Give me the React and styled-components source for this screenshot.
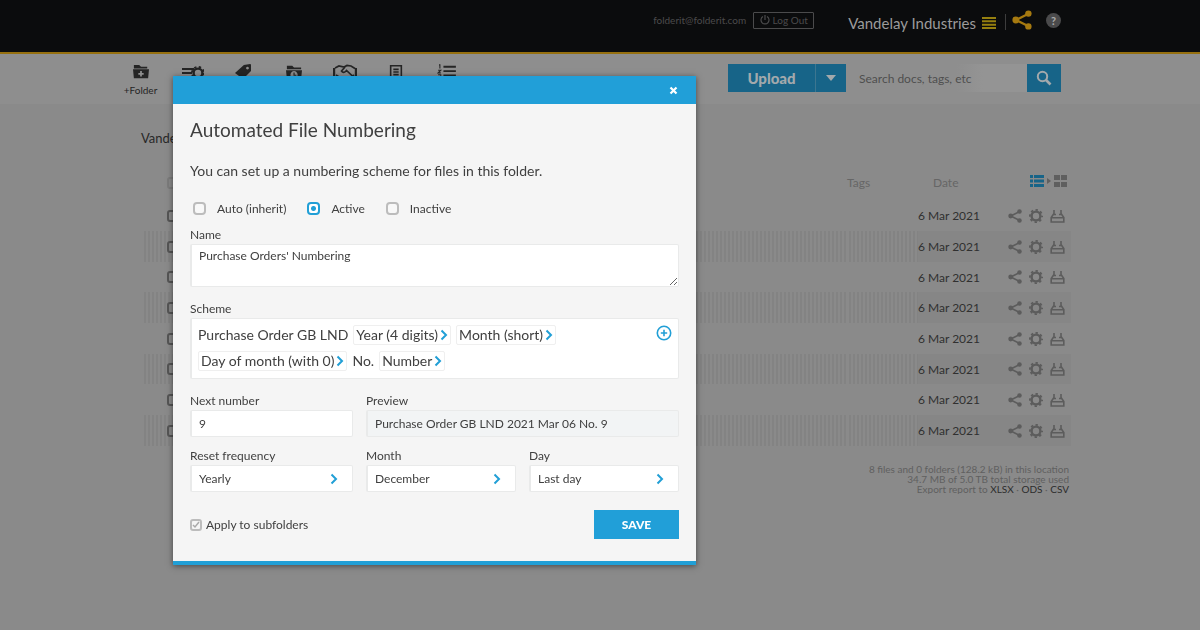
import React from 'react';
import styled, { createGlobalStyle, css } from 'styled-components';

const Global = createGlobalStyle`
  * { box-sizing: border-box; }
  body { margin: 0; background: #8a8a8a; color: #333; font-family: Lato, "Liberation Sans", sans-serif; font-size: 12px; }
  button, input, select, textarea { font: inherit; color: inherit; margin: 0; }
  button { padding: 0; border: 0; background: none; cursor: pointer; }
  svg { display: block; flex: none; }
`;

const Wrap = styled.div`
  max-width: 970px;
  margin: 0 auto;
`;

/* ---------- top bar ---------- */
const TopBar = styled.header`
  background: #0b0c0d;
  border-bottom: 2px solid #96700f;
`;
const TopInner = styled(Wrap)`
  display: flex;
  justify-content: flex-end;
  align-items: flex-start;
  height: 52px;
  padding: 8px 24px 0 0;
`;
const Account = styled.div`
  display: flex;
  align-items: center;
  gap: 7px;
  height: 24px;
  margin-right: 34px;
  font-size: 10px;
  color: #4b4b4c;
`;
const LogOut = styled.button`
  display: flex;
  align-items: center;
  justify-content: center;
  gap: 3px;
  width: 61px;
  height: 17px;
  border: 1px solid #4b4b4c;
  border-radius: 1px;
`;
const Company = styled.button`
  display: flex;
  align-items: center;
  gap: 6px;
  height: 30px;
  font-size: 15px;
  color: #9b9b9b;
`;
const Divider = styled.span`
  width: 1px;
  height: 16px;
  margin: 6px 6px 0 9px;
  background: #3d3d3d;
`;
const IconLink = styled.button`
  height: 24px;
  display: flex;
  align-items: center;
  color: #a67a10;
`;
const Help = styled.button`
  width: 15px;
  height: 15px;
  margin: 5px 0 0 14px;
  border-radius: 50%;
  background: #4a4a4b;
  color: #aaa;
  font-size: 11px;
  font-weight: 700;
  line-height: 15px;
`;

/* ---------- tool bar ---------- */
const ToolBar = styled.div`
  background: #8e8e8e;
`;
const ToolInner = styled(Wrap)`
  display: flex;
  justify-content: space-between;
  height: 50px;
  padding: 10px 24px 0 0;
`;
const Tools = styled.nav`
  display: flex;
`;
const Tool = styled.button`
  display: flex;
  flex-direction: column;
  align-items: center;
  gap: 4px;
  width: 51px;
  font-size: 10px;
  line-height: 12px;
  white-space: nowrap;
  color: #252525;
`;
const Actions = styled.div`
  display: flex;
  height: 28px;
`;
const Blue = styled.button`
  display: flex;
  align-items: center;
  justify-content: center;
  width: ${p => p.$w}px;
  height: 28px;
  background: #176488;
  color: #a3a9ac;
  font-size: 15px;
  font-weight: 900;
  border-left: ${p => (p.$split ? '1px solid #3d7690' : '0')};
`;
const Search = styled.form`
  display: flex;
  margin-left: 5px;
`;
const SearchInput = styled.input`
  width: 176px;
  height: 28px;
  padding: 0 8px;
  border: 0;
  background: linear-gradient(to right, #8e8e8e, #8e8e8e 60%, #949494 75%);
  font-size: 12px;
  outline: 0;
  &::placeholder { color: #4f4f4f; opacity: 1; }
`;

/* ---------- file list ---------- */
const Crumb = styled.div`
  padding: 26px 0 0 26px;
  font-size: 13px;
  line-height: 16px;
  color: #282828;
`;
const Files = styled.table`
  width: calc(100% - 41px);
  margin: 19px 14px 0 27px;
  border-collapse: collapse;
  table-layout: fixed;
  td, th { padding: 0; text-align: left; font-weight: 400; }
`;
const HeadRow = styled.tr`
  height: 35px;
  color: #666;
`;
const DateHead = styled.th`
  && { padding-left: 15px; }
`;
const FileRow = styled.tr`
  height: 31px;
  &:nth-child(3n) { height: 30px; }
  &:nth-child(even) { background: #868686; }
  &:nth-child(even) td:not(:nth-last-child(-n + 2)) {
    background: repeating-linear-gradient(to right, #8a8a8a 0 2px, #838383 2px 4px);
  }
  color: #303030;
`;
const RowBox = styled.input`
  appearance: none;
  display: block;
  width: 12px;
  height: 12px;
  margin-left: 25px;
  border: 2px solid ${p => (p.$faint ? '#7c7c7c' : '#555')};
  border-radius: 3px;
`;
const RowActions = styled.div`
  display: flex;
  gap: 7px;
  color: #5c5c5c;
`;
const Views = styled.div`
  display: flex;
  align-items: center;
  gap: 3px;
  padding: 0 0 4px 22px;
  color: #5f5f5f;
`;
const Summary = styled.p`
  margin: 18px 16px 0 0;
  text-align: right;
  font-size: 10px;
  line-height: 10px;
  color: #606060;
  a { color: #2c2c2c; text-decoration: none; border-bottom: 1px solid #2c2c2c; }
`;

/* ---------- dialog ---------- */
const Overlay = styled.div`
  position: fixed;
  inset: 0;
  padding: 76px 0 0 173px;
`;
const Dialog = styled.section`
  width: 523px;
  background: #f5f5f5;
  border-bottom: 4px solid #219fd6;
  box-shadow: 0 1px 6px rgba(0, 0, 0, 0.5);
  color: #404040;
`;
const DialogBar = styled.div`
  display: flex;
  justify-content: flex-end;
  align-items: center;
  height: 28px;
  padding-right: 18px;
  background: #219fd8;
  color: #fff;
`;
const Body = styled.form`
  padding: 14px 17px 22px;
`;
const Title = styled.h2`
  margin: 0;
  font-size: 19px;
  line-height: 24px;
  font-weight: 400;
`;
const Intro = styled.p`
  margin: 20px 0 0;
  font-size: 14px;
  line-height: 18px;
`;
const Radios = styled.div`
  display: flex;
  gap: 21px;
  margin: 19px 0 9px 3px;
`;
const Choice = styled.label`
  display: flex;
  align-items: center;
  gap: ${p => p.$gap}px;
  height: 18px;
  font-size: 12px;
`;
const Radio = styled.input`
  appearance: none;
  width: 13px;
  height: 13px;
  border: 2px solid #bcbcbc;
  border-radius: 4px;
  background: #f8f8f8;
  &:checked {
    border-color: #219fd6;
    background: radial-gradient(circle, #219fd6 0 2px, #fff 3px);
  }
`;
const TickHolder = styled.span`
  display: grid;
  > * { grid-area: 1 / 1; }
  svg { margin: 2px; pointer-events: none; }
`;
const Tick = styled.input`
  appearance: none;
  width: 12px;
  height: 12px;
  border: 2px solid #bcbcbc;
  border-radius: 3px;
`;
const Label = styled.label`
  display: block;
  font-size: 12px;
  line-height: 18px;
`;
const box = css`
  width: 100%;
  border: 1px solid #e9eaea;
  border-left: 2px solid #e9eaea;
  border-radius: 2px;
  background: #fff;
  outline: 0;
  font-size: 12px;
`;
const NameArea = styled.textarea`
  ${box}
  display: block;
  height: 43px;
  margin-bottom: 13px;
  padding: 3px 7px;
  line-height: 16px;
`;
const Scheme = styled.div`
  ${box}
  display: flex;
  justify-content: space-between;
  align-items: flex-start;
  height: 61px;
  margin-bottom: 13px;
  padding: 6px 6px 0;
`;
const Parts = styled.div`
  display: flex;
  flex-wrap: wrap;
  align-items: center;
  gap: 6px 5px;
  width: 400px;
  font-size: 14px;
  line-height: 20px;
`;
const Part = styled.button`
  display: flex;
  align-items: center;
  gap: 2px;
  height: 20px;
  padding: 0 2px;
  border: 1px solid #efefef;
  border-radius: 2px;
`;
const Fields = styled.div`
  display: grid;
  grid-template-columns: ${p => p.$cols};
  column-gap: 13px;
  margin-bottom: 10px;
`;
const Text = styled.input`
  ${box}
  display: block;
  height: 27px;
  padding: 0 7px;
  &:read-only { background: #f2f4f5; }
`;
const SelectHolder = styled.div`
  display: grid;
  align-items: center;
  > * { grid-area: 1 / 1; }
  svg { justify-self: end; margin-right: 15px; pointer-events: none; }
`;
const Select = styled.select`
  ${box}
  appearance: none;
  height: 27px;
  padding: 0 7px;
`;
const Foot = styled.div`
  display: flex;
  justify-content: space-between;
  align-items: center;
  margin-top: 18px;
`;
const Save = styled.button`
  width: 85px;
  height: 29px;
  background: #219fd8;
  color: #fff;
  font-size: 12px;
  font-weight: 900;
`;

/* ---------- drawings ---------- */
const Chevron = () => (
  <svg width="8" height="12" viewBox="0 0 8 12" fill="none" stroke="#219fd6" strokeWidth="2"><path d="M1.5 1.5 6 6l-4.5 4.5" /></svg>
);
const ShareIcon = ({ s }) => (
  <svg width={s} height={s} viewBox="0 0 20 20" fill="currentColor"><path d="M16 4 4 10l12 6" fill="none" stroke="currentColor" strokeWidth="2.4" /><circle cx="16.4" cy="3.6" r="3.2" /><circle cx="3.8" cy="10" r="3.4" /><circle cx="16.4" cy="16.4" r="3.2" /></svg>
);
const GearIcon = () => (
  <svg width="14" height="14" viewBox="0 0 14 14" fill="none" stroke="currentColor"><circle cx="7" cy="7" r="4.4" strokeWidth="2.4" /><circle cx="7" cy="7" r="6.1" strokeWidth="1.8" strokeDasharray="2.4 2.39" strokeDashoffset="1.2" /></svg>
);
const TrayIcon = () => (
  <svg width="15" height="14" viewBox="0 0 15 14" fill="none" stroke="currentColor" strokeWidth="1.6"><path d="M4 1v3.500L1.200 8.500V13h12.600V8.500L11 4.500V1M1 8.700h13M3.500 5.500h2.500M9 5.500h2.500" /></svg>
);
const toolIcons = [
  { name: 'Folder', art: <path fill="currentColor" fillRule="evenodd" d="M2 1h6l2 2h7v2H2zM1 6h18l-1 10H2zm8 2v2H7v2h2v2h2v-2h2v-2h-2V8z" /> },
  { name: 'Rules', wide: true, art: <g><path d="M0 6h12M0 10h10M0 14h9" stroke="currentColor" strokeWidth="2" /><circle cx="16" cy="10" r="4.4" fill="none" stroke="currentColor" strokeWidth="2.4" /><circle cx="16" cy="10" r="6" fill="none" stroke="currentColor" strokeWidth="2" strokeDasharray="2.36 2.36" /></g> },
  { name: 'Tags', art: <path fill="currentColor" fillRule="evenodd" d="M11 1 18 0q1 0 1 1v7l-9 9-9-7zm4 2a1.6 1.6 0 1 0 .1 0z" /> },
  { name: 'Retention', art: <path fill="currentColor" fillRule="evenodd" d="M2 2h6l2 2h8v2H2zM1 7h18l-1 10H2zm9 1a4 4 0 1 0 .1 0zm-.6 1.500h1.300v2.500h2v1.200H9.400z" /> },
  { name: 'Sharing', wide: true, art: <g fill="none" stroke="currentColor" strokeWidth="1.700"><path d="M-1 5v8M21 5v8" strokeWidth="2.400" /><path d="M0 5l4-2 5 1 3-1.500 4 .5 4 2.500M1 12l6 4M19 12l-5 4M10 4 6.500 8q2 3 5-.5l6.500 6" /></g> },
  { name: 'Log', art: <path fill="none" stroke="currentColor" strokeWidth="1.800" d="M4 2h12v18H4zM7 6h6M7 9h6M7 12h6" /> },
  { name: 'Numbering', art: <g stroke="currentColor" fill="none"><path d="M6 3h14M6 8h14M6 13h14" strokeWidth="2.200" /><path d="M1 1h1v4M0 7h3l-3 3h3M0 12h3v4H0" strokeWidth="1.200" /></g> },
];
const parts = [
  { t: 'Purchase Order GB LND' },
  { t: 'Year (4 digits)', v: 1 },
  { t: 'Month (short)', v: 1 },
  { t: 'Day of month (with 0)', v: 1 },
  { t: 'No.' },
  { t: 'Number', v: 1 },
];

const Dropdown = ({ id, label, value }) => (
  <div>
    <Label htmlFor={id}>{label}</Label>
    <SelectHolder>
      <Select id={id} defaultValue={value}><option>{value}</option></Select>
      <Chevron />
    </SelectHolder>
  </div>
);

export default function App() {
  return (
    <>
      <Global />
      <TopBar>
        <TopInner>
          <Account>
            <span>folderit@folderit.com</span>
            <LogOut>
              <svg width="10" height="10" viewBox="0 0 10 10" fill="none" stroke="currentColor" strokeWidth="1.200"><path d="M3 1.500a4 4 0 1 0 4 0M5 0v5" /></svg>
              Log Out
            </LogOut>
          </Account>
          <Company>
            Vandelay Industries
            <svg width="14" height="12" viewBox="0 0 14 12" stroke="#96800f" strokeWidth="2"><path d="M0 1h14M0 4.300h14M0 7.700h14M0 11h14" /></svg>
          </Company>
          <Divider />
          <IconLink aria-label="Share"><ShareIcon s={20} /></IconLink>
          <Help>?</Help>
        </TopInner>
      </TopBar>

      <ToolBar>
        <ToolInner>
          <Tools>
            {toolIcons.map((tool, i) => (
              <Tool key={tool.name} aria-label={tool.name}>
                {tool.wide
                  ? <svg width="24" height="16" viewBox="-2 1 24 16">{tool.art}</svg>
                  : <svg width="20" height="16" viewBox="-1 0 22 18">{tool.art}</svg>}
                {i === 0 && '+Folder'}
              </Tool>
            ))}
          </Tools>
          <Actions>
            <Blue $w={87}>Upload</Blue>
            <Blue $w={31} $split aria-label="More upload options">
              <svg width="10" height="6" viewBox="0 0 10 6" fill="currentColor"><path d="M0 0h10L5 6z" /></svg>
            </Blue>
            <Search>
              <SearchInput aria-label="Search" placeholder="Search docs, tags, etc" />
              <Blue $w={34} aria-label="Search">
                <svg width="16" height="16" viewBox="0 0 16 16" fill="none" stroke="currentColor" strokeWidth="2"><circle cx="6.500" cy="6.500" r="4.700" /><path d="m10 10 4.500 4.500" strokeWidth="2.600" /></svg>
              </Blue>
            </Search>
          </Actions>
        </ToolInner>
      </ToolBar>

      <Wrap as="main">
        <Crumb>Vandelay</Crumb>
        <Files>
          <colgroup>
            <col />
            <col width="71" />
            <col width="90" />
            <col width="63" />
          </colgroup>
          <thead>
            <HeadRow>
              <th><RowBox type="checkbox" $faint aria-label="Select all" /></th>
              <th>Tags</th>
              <DateHead>Date</DateHead>
              <th>
                <Views>
                  <svg width="14" height="12" viewBox="0 0 14 12" stroke="#176488" strokeWidth="3"><path d="M0 1.500h3M4 1.500h10M0 6h3M4 6h10M0 10.500h3M4 10.500h10" /></svg>
                  <svg width="4" height="6" viewBox="0 0 4 6" fill="currentColor"><path d="M0 0l4 3-4 3z" /></svg>
                  <svg width="14" height="12" viewBox="0 0 14 12" fill="currentColor"><path d="M0 0h6v5H0zM7 0h6v5H7zM0 7h6v5H0zM7 7h6v5H7z" /></svg>
                </Views>
              </th>
            </HeadRow>
          </thead>
          <tbody>
            {Array.from({ length: 8 }, (_, i) => (
              <FileRow key={i}>
                <td><RowBox type="checkbox" aria-label={`Select file ${i + 1}`} /></td>
                <td />
                <td>6 Mar 2021</td>
                <td><RowActions><ShareIcon s={14} /><GearIcon /><TrayIcon /></RowActions></td>
              </FileRow>
            ))}
          </tbody>
        </Files>
        <Summary>
          8 files and 0 folders (128.2 kB) in this location<br />
          34.7 MB of 5.0 TB total storage used<br />
          Export report to <a href="#xlsx">XLSX</a> · <a href="#ods">ODS</a> · <a href="#csv">CSV</a>
        </Summary>
      </Wrap>

      <Overlay>
        <Dialog role="dialog" aria-labelledby="title">
          <DialogBar>
            <button aria-label="Close">
              <svg width="9" height="9" viewBox="0 0 9 9" stroke="#fff" strokeWidth="2.200"><path d="m1.500 1.500 6 6m0-6-6 6" /></svg>
            </button>
          </DialogBar>
          <Body>
            <Title id="title">Automated File Numbering</Title>
            <Intro>You can set up a numbering scheme for files in this folder.</Intro>
            <Radios>
              {['Auto (inherit)', 'Active', 'Inactive'].map(t => (
                <Choice key={t} $gap={11}><Radio type="radio" name="mode" defaultChecked={t === 'Active'} />{t}</Choice>
              ))}
            </Radios>
            <Label htmlFor="name">Name</Label>
            <NameArea id="name" defaultValue="Purchase Orders' Numbering" />
            <Label as="div" id="scheme">Scheme</Label>
            <Scheme role="group" aria-labelledby="scheme">
              <Parts>
                {parts.map(p => (p.v ? <Part type="button" key={p.t}>{p.t}<Chevron /></Part> : <span key={p.t}>{p.t}</span>))}
              </Parts>
              <button type="button" aria-label="Add">
                <svg width="16" height="16" viewBox="0 0 16 16" fill="none" stroke="#219fd6" strokeWidth="1.600"><circle cx="8" cy="8" r="6.700" /><path d="M8 4.800v6.400M4.800 8h6.400" /></svg>
              </button>
            </Scheme>
            <Fields $cols="163px 1fr">
              <div><Label htmlFor="next">Next number</Label><Text id="next" defaultValue="9" /></div>
              <div><Label htmlFor="preview">Preview</Label><Text id="preview" readOnly value="Purchase Order GB LND 2021 Mar 06 No. 9" /></div>
            </Fields>
            <Fields $cols="163px 1fr 1fr">
              <Dropdown id="freq" label="Reset frequency" value="Yearly" />
              <Dropdown id="month" label="Month" value="December" />
              <Dropdown id="day" label="Day" value="Last day" />
            </Fields>
            <Foot>
              <Choice $gap={4}>
                <TickHolder>
                  <Tick type="checkbox" defaultChecked />
                  <svg width="8" height="8" viewBox="0 0 8 8" fill="none" stroke="#aaa" strokeWidth="1.500"><path d="m1 4 2 2 4-5" /></svg>
                </TickHolder>
                Apply to subfolders
              </Choice>
              <Save type="button">SAVE</Save>
            </Foot>
          </Body>
        </Dialog>
      </Overlay>
    </>
  );
}
